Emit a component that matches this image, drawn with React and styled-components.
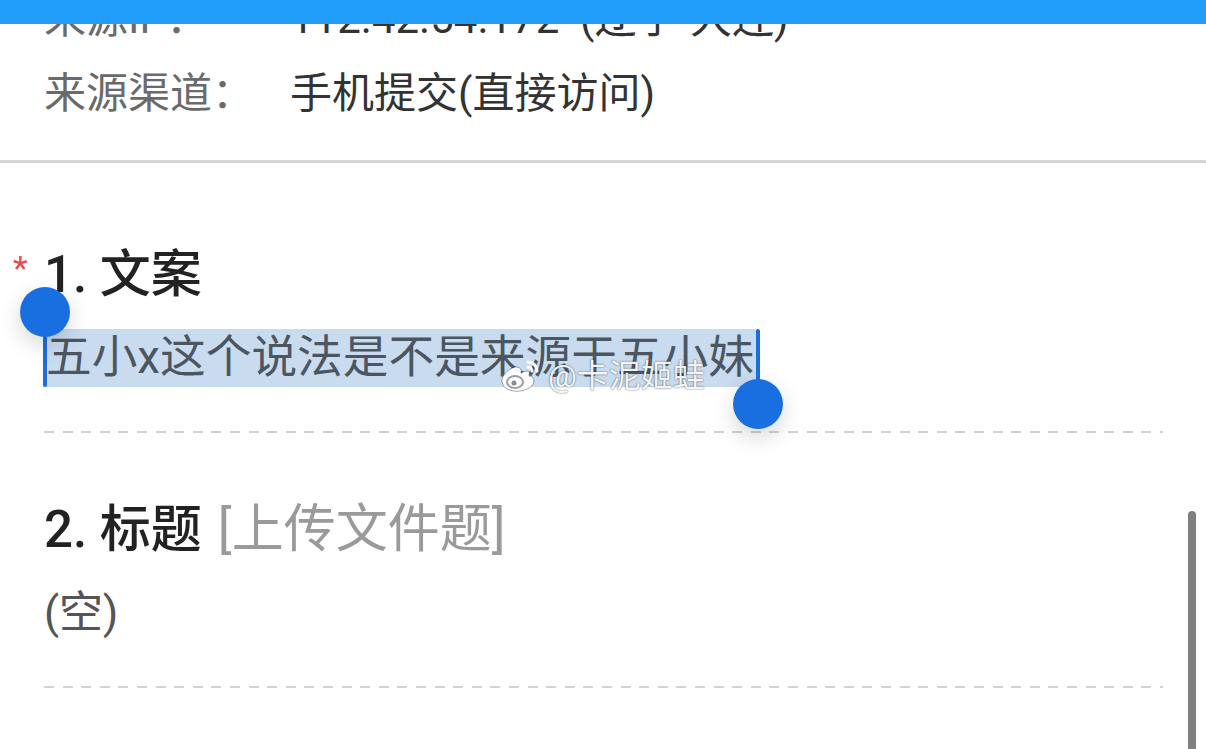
import React from "react";
import styled, { createGlobalStyle } from "styled-components";

const GlobalStyle = createGlobalStyle`
  html, body {
    margin: 0;
    padding: 0;
    background: #ffffff;
    overflow: hidden;
  }
  body {
    font-family: "Roboto", "Noto Sans CJK SC", sans-serif;
    -webkit-font-smoothing: antialiased;
  }
`;

const TopBar = styled.div`
  position: fixed;
  top: 0;
  left: 0;
  right: 0;
  height: 24px;
  background: #219ef9;
  z-index: 10;
`;

const Page = styled.div`
  position: relative;
  width: 1206px;
  height: 749px;
  overflow: hidden;
`;

const InfoSection = styled.section`
  margin-top: -19px;
  padding: 0 44px 29px;
  border-bottom: 3px solid #d6d6d6;
`;

const InfoRow = styled.div`
  display: grid;
  grid-template-columns: 246px 1fr;
  font-size: 42px;
  line-height: 75px;
  white-space: nowrap;
`;

const InfoLabel = styled.span`
  color: #6a6a6a;
`;

const InfoValue = styled.span`
  color: #333333;
`;

const QuestionList = styled.div`
  padding-top: 15px;
`;

const Question = styled.div`
  margin: 0 43px 0 44px;
  padding-top: 67px;
`;

const QuestionTitle = styled.div`
  display: flex;
  align-items: baseline;
  font-size: 51px;
  line-height: 60px;
  font-weight: 500;
  color: #222222;
  white-space: nowrap;
`;

const Required = styled.span`
  margin-left: -31px;
  width: 31px;
  align-self: flex-start;
  font-size: 34px;
  line-height: 46px;
  font-weight: 400;
  color: #f04848;
`;

const TitleNote = styled.span`
  margin-left: 16px;
  font-size: 52px;
  font-weight: 400;
  color: #9a9a9a;
`;

const Answer = styled.div`
  margin-top: 24px;
  font-size: ${(p) => (p.$small ? "44px" : "45.7px")};
  line-height: 58px;
  height: 58px;
  color: #555555;
  white-space: nowrap;
`;

const Selection = styled.span`
  position: relative;
  display: inline-block;
  height: 58px;
  padding: 0 4px 0 3px;
  margin-left: -1px;
  background: #c9dbef;
  color: #4b5661;
`;

const HandleStem = styled.span`
  position: absolute;
  top: 0;
  width: 4px;
  height: ${(p) => (p.$end ? "70px" : "58px")};
  background: #1a6fe0;
  border-radius: 2px;
  ${(p) => (p.$end ? "right: -2px;" : "left: 0;")}
`;

const HandleKnob = styled.span`
  position: absolute;
  width: 50px;
  height: 50px;
  border-radius: 50%;
  background: #1a6fe0;
  box-shadow: 0 8px 22px rgba(0, 0, 0, 0.16);
  ${(p) =>
    p.$end
      ? "right: -25px; top: 50px;"
      : "left: -23px; top: -42px;"}
`;

const Separator = styled.div`
  margin-top: 44px;
  height: 2px;
  background: repeating-linear-gradient(
    90deg,
    #d2d2d2 0 10px,
    transparent 10px 18.6px
  );
`;

const Watermark = styled.div`
  position: absolute;
  left: 498px;
  top: 357px;
  display: flex;
  align-items: center;
  gap: 4px;
  font-size: 32px;
  line-height: 38px;
  color: rgba(255, 255, 255, 0.96);
  text-shadow: 0 0 2px rgba(0, 0, 0, 0.45), 0 0 1px rgba(0, 0, 0, 0.4);
  pointer-events: none;
  white-space: nowrap;
`;

const ScrollThumb = styled.div`
  position: fixed;
  right: 10px;
  top: 511px;
  bottom: 0;
  width: 8px;
  border-radius: 4px 4px 0 0;
  background: #808080;
`;

const WeiboMark = () => (
  <svg width="46" height="36" viewBox="0 0 46 36" aria-hidden="true">
    <g
      fill="rgba(255,255,255,0.95)"
      stroke="rgba(0,0,0,0.35)"
      strokeWidth="1"
    >
      <path d="M17 9c-7 2-14 9-13 15 1 7 10 10 18 9 8-1 14-5 14-10 0-3-2-5-5-5 1-3 0-5-2-5-2 0-4 1-6 2 1-3 0-6-6-6z" />
    </g>
    <ellipse cx="17" cy="24" rx="8" ry="6" fill="none" stroke="rgba(120,120,120,0.7)" strokeWidth="2" />
    <circle cx="16" cy="25" r="2.5" fill="rgba(110,110,110,0.8)" />
    <path d="M30 4c5 0 9 4 9 9" fill="none" stroke="rgba(255,255,255,0.95)" strokeWidth="3" strokeLinecap="round" />
    <path d="M30 9c2 0 4 2 4 4" fill="none" stroke="rgba(255,255,255,0.95)" strokeWidth="3" strokeLinecap="round" />
  </svg>
);

const infoRows = [
  { label: "来源IP：", value: "112.42.54.172 \u00a0(辽宁-大连)" },
  { label: "来源渠道：", value: "手机提交(直接访问)" },
];

export default function App() {
  return (
    <>
      <GlobalStyle />
      <TopBar />
      <Page>
        <InfoSection>
          {infoRows.map((row) => (
            <InfoRow key={row.label}>
              <InfoLabel>{row.label}</InfoLabel>
              <InfoValue>{row.value}</InfoValue>
            </InfoRow>
          ))}
        </InfoSection>

        <QuestionList>
          <Question>
            <QuestionTitle>
              <Required>*</Required>
              1. 文案
            </QuestionTitle>
            <Answer>
              <Selection>
                <HandleStem />
                <HandleKnob />
                五小x这个说法是不是来源于五小妹
                <HandleStem $end />
                <HandleKnob $end />
              </Selection>
            </Answer>
            <Separator />
          </Question>

          <Question>
            <QuestionTitle>
              2. 标题
              <TitleNote>[上传文件题]</TitleNote>
            </QuestionTitle>
            <Answer $small>(空)</Answer>
            <Separator />
          </Question>
        </QuestionList>

        <Watermark>
          <WeiboMark />
          @卡泥姬蛙
        </Watermark>
      </Page>
      <ScrollThumb />
    </>
  );
}
